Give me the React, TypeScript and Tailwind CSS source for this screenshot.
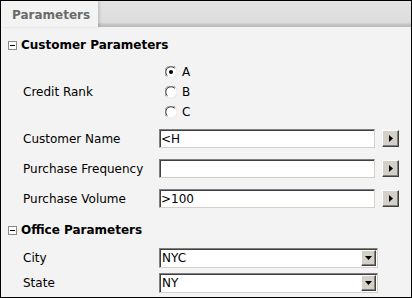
import React from 'react'

const font = { fontFamily: '"DejaVu Sans", Verdana, sans-serif' }

function CollapseIcon() {
  return (
    <span className="relative flex h-[9px] w-[9px] shrink-0 items-center justify-center border border-[#8a8a8a] bg-white">
      <span className="h-px w-[5px] bg-black" />
    </span>
  )
}

function Radio({ checked }: { checked?: boolean }) {
  return (
    <svg width="12" height="12" viewBox="0 0 12 12" className="shrink-0">
      <circle cx="6" cy="6" r="5.5" fill="#ffffff" />
      <path d="M1.5 10.5 A6 6 0 0 1 10.5 1.5" fill="none" stroke="#808080" strokeWidth="1" />
      <path d="M2.3 9.7 A5 5 0 0 1 9.7 2.3" fill="none" stroke="#404040" strokeWidth="1" />
      <path d="M10.5 1.5 A6 6 0 0 1 1.5 10.5" fill="none" stroke="#e4e4e4" strokeWidth="1" />
      {checked && <circle cx="6" cy="6" r="2" fill="#000000" />}
    </svg>
  )
}

function Section({ title }: { title: string }) {
  return (
    <div className="ml-[7px] flex h-[16px] items-center gap-[4px]">
      <CollapseIcon />
      <span className="whitespace-nowrap text-[12px] font-bold leading-none text-black">{title}</span>
    </div>
  )
}

function Label({ text }: { text: string }) {
  return (
    <span className="w-[158px] shrink-0 whitespace-nowrap pl-[22px] text-[12px] text-black">{text}</span>
  )
}

function ArrowButton() {
  return (
    <button
      type="button"
      className="flex h-[17px] w-[17px] items-center justify-center border border-b-[#404040] border-l-white border-r-[#404040] border-t-white bg-[#d4d0c8] shadow-[inset_-1px_-1px_0_#808080]"
    >
      <svg width="4" height="7" viewBox="0 0 4 7">
        <path d="M0 0 L4 3.5 L0 7 Z" fill="#000" />
      </svg>
    </button>
  )
}

function TextRow({ label, value }: { label: string; value: string }) {
  return (
    <div className="flex h-[19px] items-center">
      <Label text={label} />
      <div className="flex h-[19px] w-[216px] shrink-0 items-center border border-b-[#d4d0c8] border-l-[#808080] border-r-[#d4d0c8] border-t-[#808080] bg-white pl-[1px] text-[12px] text-black shadow-[inset_1px_1px_0_#404040]">
        {value}
      </div>
      <div className="ml-[7px]">
        <ArrowButton />
      </div>
    </div>
  )
}

function SelectRow({ label, value }: { label: string; value: string }) {
  return (
    <div className="flex h-[20px] items-center">
      <Label text={label} />
      <div className="flex h-[20px] w-[219px] shrink-0 items-center border border-b-[#d4d0c8] border-l-[#808080] border-r-[#d4d0c8] border-t-[#808080] bg-white pl-[2px] shadow-[inset_1px_1px_0_#404040]">
        <span className="flex-1 text-[12px] text-black">{value}</span>
        <span className="mr-[1px] flex h-[16px] w-[15px] items-center justify-center border border-b-[#404040] border-l-white border-r-[#404040] border-t-white bg-[#d4d0c8] shadow-[inset_-1px_-1px_0_#808080]">
          <svg width="7" height="4" viewBox="0 0 7 4">
            <path d="M0 0 L7 0 L3.5 4 Z" fill="#000" />
          </svg>
        </span>
      </div>
    </div>
  )
}

export default function App() {
  return (
    <div
      className="flex h-[298px] w-[412px] flex-col overflow-hidden border border-black bg-[#f3f3f3]"
      style={font}
    >
      <div className="flex h-[26px] shrink-0 bg-[linear-gradient(to_bottom,#e3e3e3_0%,#dddddd_82%,#c6c6c6_90%,#b9b9b9_100%)]">
        <div className="flex w-[97px] items-center bg-[#f3f3f3] pl-[11px] pt-[2px] text-[12px] font-bold text-[#6a6a6a] shadow-[2px_0_2px_rgba(0,0,0,0.12)]">
          Parameters
        </div>
      </div>

      <div className="mt-[10px]">
        <Section title="Customer Parameters" />
      </div>

      <div className="mt-[9px] flex items-center">
        <Label text="Credit Rank" />
        <div className="ml-[6px] flex flex-col">
          {['A', 'B', 'C'].map((opt, i) => (
            <label key={opt} className="flex h-[20px] items-center gap-[5px] text-[12px] text-black">
              <Radio checked={i === 0} />
              {opt}
            </label>
          ))}
        </div>
      </div>

      <div className="mt-[7px] flex flex-col gap-[11px]">
        <TextRow label="Customer Name" value="<H" />
        <TextRow label="Purchase Frequency" value="" />
        <TextRow label="Purchase Volume" value=">100" />
      </div>

      <div className="mt-[14px]">
        <Section title="Office Parameters" />
      </div>

      <div className="mt-[10px] flex flex-col gap-[5px]">
        <SelectRow label="City" value="NYC" />
        <SelectRow label="State" value="NY" />
      </div>
    </div>
  )
}
